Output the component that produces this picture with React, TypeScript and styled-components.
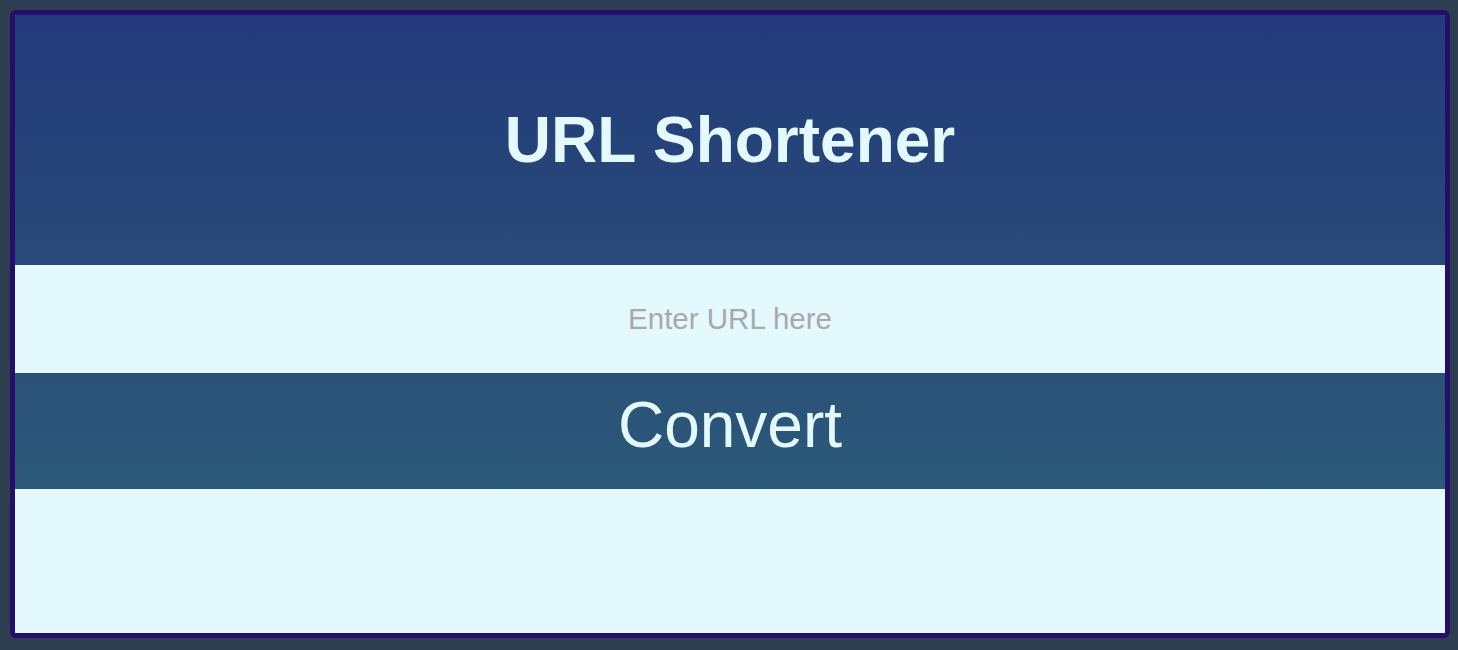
import React from "react";
import styled, { createGlobalStyle } from "styled-components";

const Global = createGlobalStyle`
  html, body {
    margin: 0;
    padding: 0;
    background: #2c3e50;
    font-family: "Liberation Sans", Arial, sans-serif;
  }
`;

const Page = styled.div`
  padding: 10px 8px 12px 10px;
`;

const Card = styled.div`
  border: 5px solid #230f6b;
  border-radius: 6px;
  overflow: hidden;
  display: flex;
  flex-direction: column;
  background: #e4f9fd;
`;

const Header = styled.header`
  height: 250px;
  display: flex;
  align-items: center;
  justify-content: center;
  background: linear-gradient(to bottom, #223a7b, #284a78);
`;

const Title = styled.h1`
  margin: 0;
  font-size: 64px;
  font-weight: 700;
  color: #e4f9fd;
`;

const UrlInput = styled.input`
  height: 108px;
  box-sizing: border-box;
  border: none;
  outline: none;
  background: #e4f9fd;
  text-align: center;
  font-family: "Liberation Sans", Arial, sans-serif;
  font-size: 29.5px;
  color: #333;
  padding: 0;
  &::placeholder {
    color: #a9a9a9;
  }
`;

const ConvertButton = styled.button`
  height: 116px;
  box-sizing: border-box;
  border: none;
  padding: 15px 0 27px;
  background: linear-gradient(to bottom, #2a5177, #2c5a7a);
  color: #e4f9fd;
  font-family: "Liberation Sans", Arial, sans-serif;
  font-size: 64px;
  line-height: normal;
  cursor: pointer;
`;

const Result = styled.div`
  height: 144px;
  background: #e4f9fd;
`;

export default function App() {
  return (
    <Page>
      <Global />
      <Card>
        <Header>
          <Title>URL Shortener</Title>
        </Header>
        <UrlInput placeholder="Enter URL here" />
        <ConvertButton>Convert</ConvertButton>
        <Result />
      </Card>
    </Page>
  );
}
